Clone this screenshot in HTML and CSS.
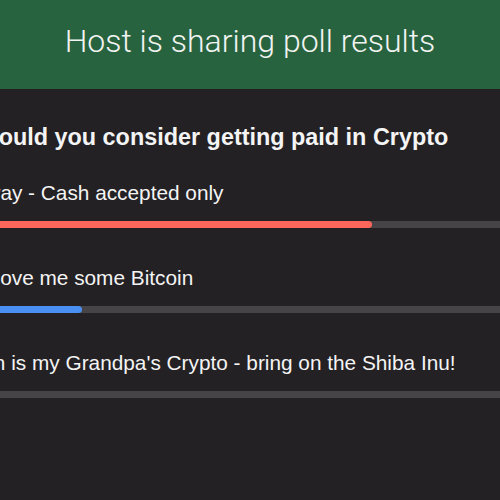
FILE: index.html
```html
<!DOCTYPE html>
<html lang="en">
<head>
<meta charset="utf-8">
<title>Poll results</title>
<link rel="stylesheet" href="styles.css">
</head>
<body>
  <header class="banner">
    <h1 class="banner-title">Host is sharing poll results</h1>
  </header>
  <main class="poll">
    <h2 class="question">Would you consider getting paid in Crypto</h2>
    <ul class="options">
      <li class="option option-a">
        <span class="option-label">No way - Cash accepted only</span>
        <div class="track"><div class="fill fill-red" style="width:75%"></div></div>
      </li>
      <li class="option option-b">
        <span class="option-label">I love me some Bitcoin</span>
        <div class="track"><div class="fill fill-blue" style="width:25%"></div></div>
      </li>
      <li class="option option-c">
        <span class="option-label">Bitcoin is my Grandpa's Crypto - bring on the Shiba Inu!</span>
        <div class="track"><div class="fill" style="width:0%"></div></div>
      </li>
    </ul>
  </main>
</body>
</html>
```
FILE: styles.css
```css
html, body {
  margin: 0;
  padding: 0;
  width: 500px;
  height: 500px;
  overflow: hidden;
  background: #232124;
  font-family: "Liberation Sans", Arial, sans-serif;
  color: #f4f4f4;
}

.banner {
  height: 89px;
  box-sizing: border-box;
  padding-bottom: 8px;
  background: #28633f;
  display: flex;
  align-items: center;
  justify-content: center;
}

.banner-title {
  margin: 0;
  font-family: Roboto, "Liberation Sans", sans-serif;
  font-size: 32px;
  font-weight: 300;
  color: #f2f4f2;
  white-space: nowrap;
}

.poll {
  width: 580px;
  margin-left: -63px;
  padding-top: 35px;
}

.question {
  margin: 0 0 29px 40px;
  font-size: 23.4px;
  line-height: 27.6px;
  font-weight: 700;
  white-space: nowrap;
}

.options {
  list-style: none;
  margin: 0;
  padding: 0;
  display: flex;
  flex-direction: column;
  gap: 38px;
}

.option {
  display: flex;
  flex-direction: column;
  gap: 16px;
}

.option-label {
  font-size: 20.8px;
  line-height: 24px;
  white-space: nowrap;
}

.option-a .option-label { padding-left: 16px; }
.option-b .option-label { padding-left: 47px; }
.option-c .option-label { padding-left: 6px; }

.track {
  height: 7px;
  background: #464446;
  border-radius: 4px;
  overflow: hidden;
}

.fill {
  height: 100%;
  border-radius: 4px;
}

.fill-red { background: #fd665a; }
.fill-blue { background: #4a8ff2; }
```
